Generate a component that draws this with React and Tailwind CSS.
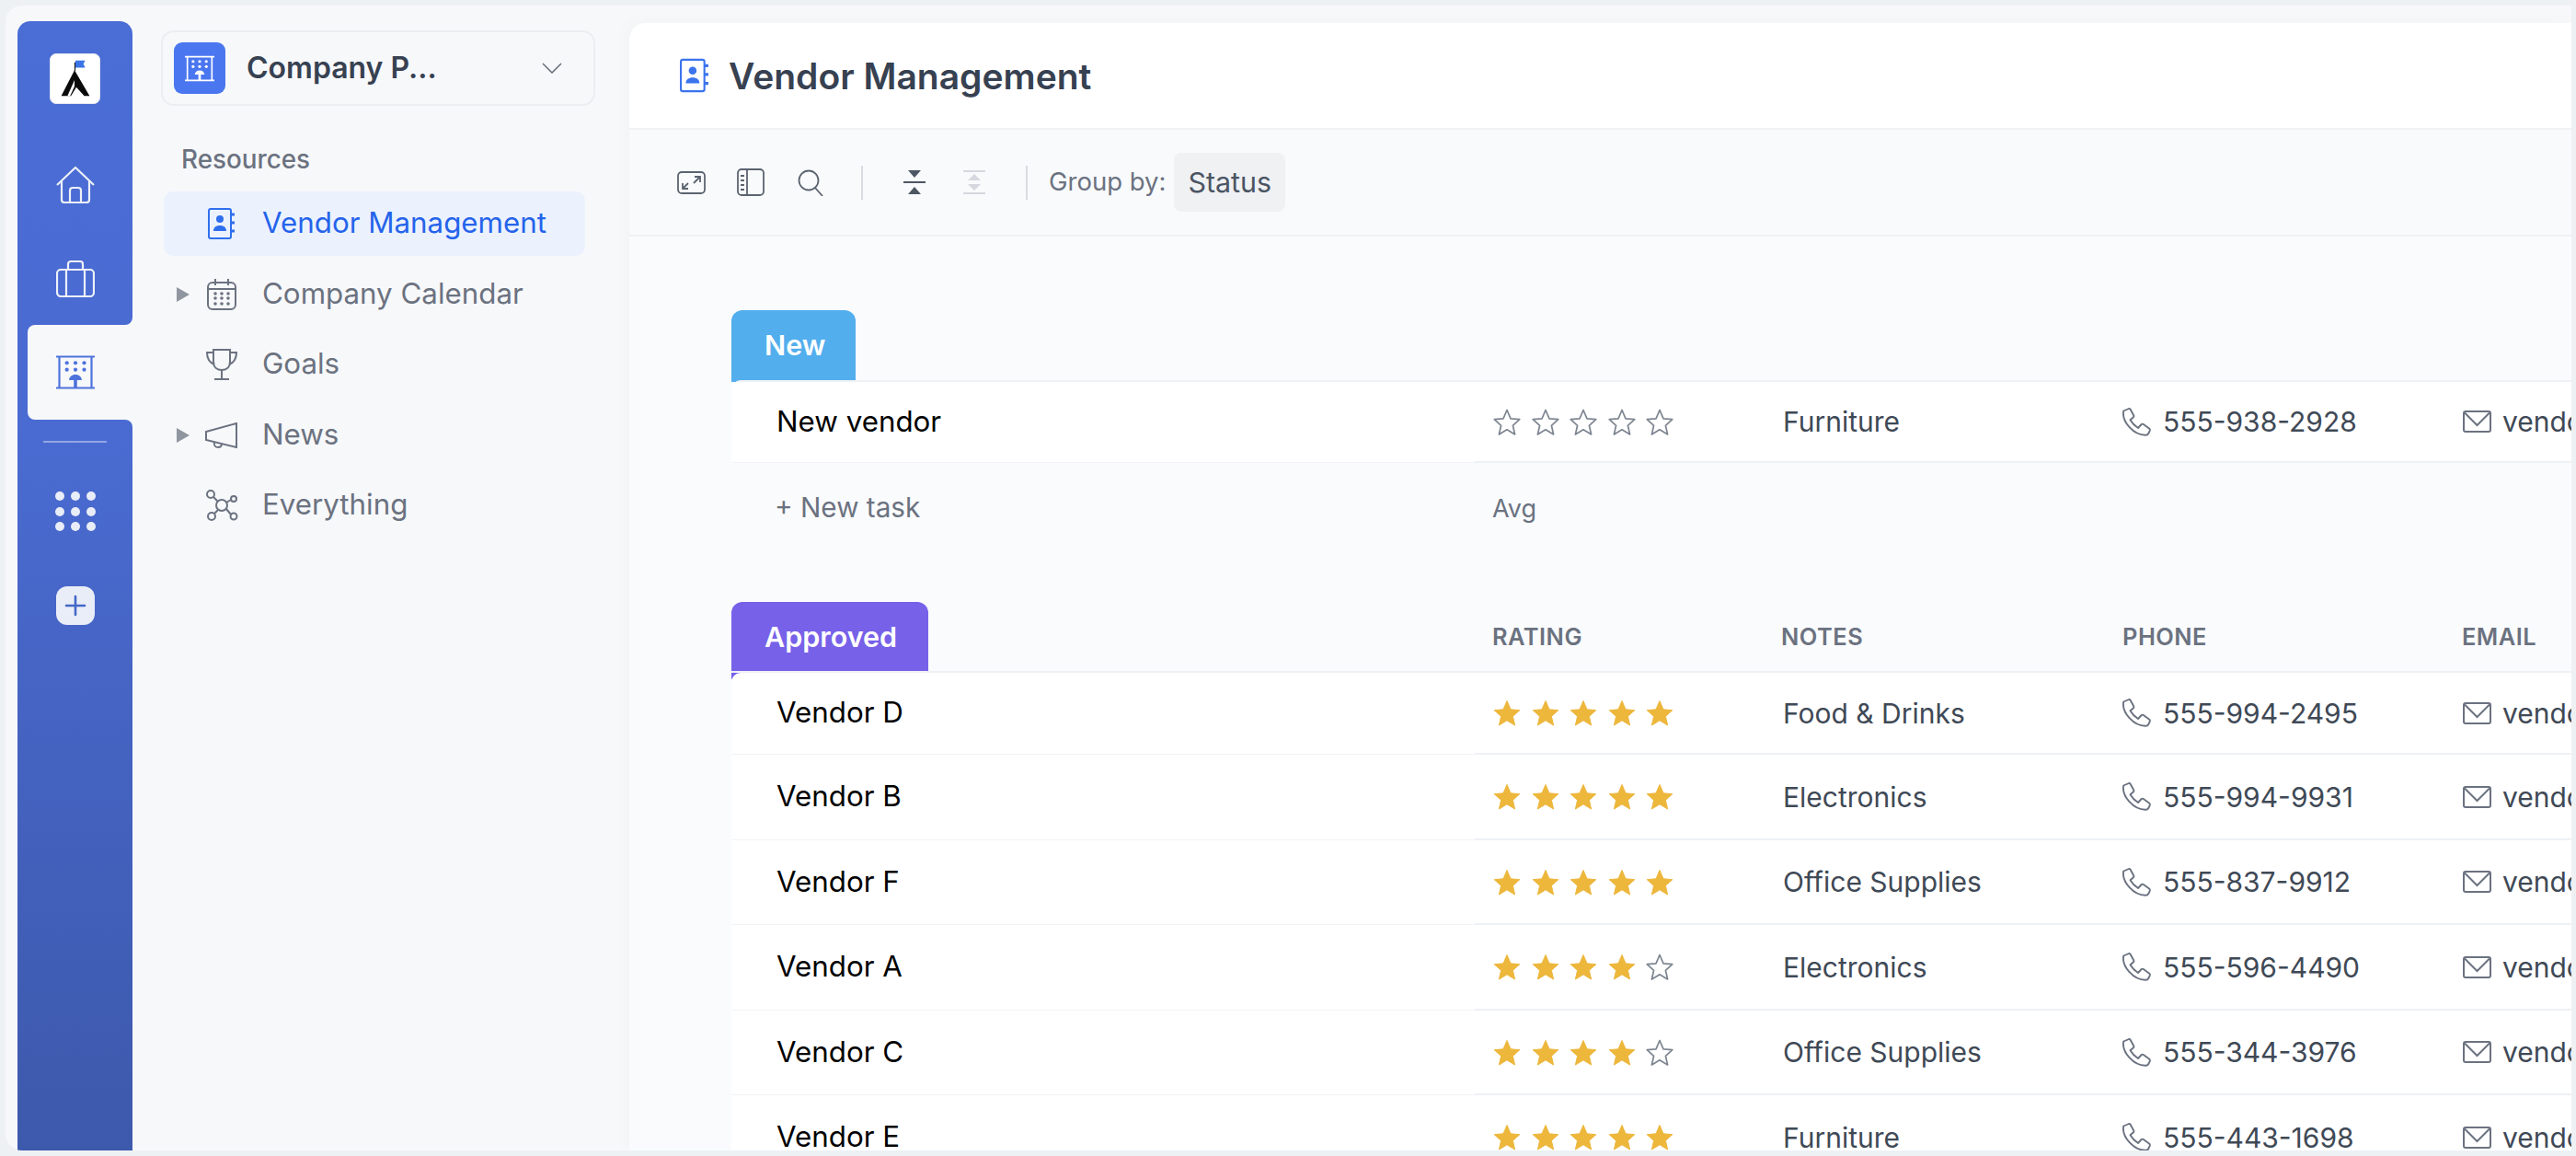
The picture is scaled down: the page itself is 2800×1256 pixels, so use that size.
const VENDORS = [
  { name: 'Vendor D', rating: 5, notes: 'Food & Drinks', phone: '555-994-2495', email: 'vendord@example.com', height: 'h-[89px]' },
  { name: 'Vendor B', rating: 5, notes: 'Electronics', phone: '555-994-9931', email: 'vendorb@example.com', height: 'h-[93px]' },
  { name: 'Vendor F', rating: 5, notes: 'Office Supplies', phone: '555-837-9912', email: 'vendorf@example.com', height: 'h-[92px]' },
  { name: 'Vendor A', rating: 4, notes: 'Electronics', phone: '555-596-4490', email: 'vendora@example.com', height: 'h-[93px]' },
  { name: 'Vendor C', rating: 4, notes: 'Office Supplies', phone: '555-344-3976', email: 'vendorc@example.com', height: 'h-[92px]' },
  { name: 'Vendor E', rating: 5, notes: 'Furniture', phone: '555-443-1698', email: 'vendore@example.com', height: 'h-[93px]' },
];

const GRID = 'grid grid-cols-[808px_335px_369px_370px_1fr]';

const BuildingIcon = ({ className }) => (
  <svg viewBox="0 0 42 37" className={className} fill="none" stroke="currentColor" strokeWidth="2.2">
    <path d="M0 1.5h42M0 35.5h42M3.5 1.5v34M38.5 1.5v34" />
    <g fill="currentColor" stroke="none">
      {[11.7, 21, 30.5].flatMap((x) => [8.3, 15.7].map((y) => <circle key={`${x}-${y}`} cx={x} cy={y} r="2.1" />))}
      <path d="M21 21c-4 0-6.5 2.5-7 6h5.2v8h3.6v-8H28c-.5-3.5-3-6-7-6z" />
    </g>
  </svg>
);

const ContactBook = ({ className }) => (
  <svg viewBox="0 0 30 34" className={className} fill="none" stroke="currentColor" strokeWidth="2">
    <rect x="1" y="1" width="24" height="32" rx="2" />
    <path d="M25 7h4M25 16h4M25 25h4" strokeWidth="3" />
    <circle cx="13" cy="12" r="4" fill="currentColor" stroke="none" />
    <path d="M6 25c0-4 3-6 7-6s7 2 7 6z" fill="currentColor" stroke="none" />
  </svg>
);

const Star = ({ filled }) => (
  <svg viewBox="0 0 30 29" className="w-[30px] h-[29px] shrink-0">
    <path
      d="M15 1.5l4 9.3 9.8.9-7.4 6.6 2.2 9.7L15 22.8 6.4 28l2.2-9.7-7.4-6.6 9.8-.9z"
      fill={filled ? '#edb73c' : 'none'}
      stroke={filled ? '#edb73c' : '#7d8590'}
      strokeWidth={filled ? 1 : 1.7}
      strokeLinejoin="round"
    />
  </svg>
);

const Stars = ({ count }) => (
  <div className="flex gap-[11.6px]">
    {[1, 2, 3, 4, 5].map((n) => <Star key={n} filled={n <= count} />)}
  </div>
);

const PhoneIcon = () => (
  <svg viewBox="0 0 31 31" className="w-[31px] h-[31px] shrink-0" fill="none" stroke="#6b7280" strokeWidth="1.9" strokeLinejoin="round">
    <path d="M1.2 3.5L7 1q1-.2 1.6.8l3.7 6.7q.3 1-.3 1.7l-3.5 3.1q3 5.2 8.5 8.7l3.7-4q.8-.7 1.8-.2l6.5 4.7q1.2 1 .8 2.3L28.3 28q-.8 1.8-3.3 1.8C12 29.8-1 15 1.2 3.5z" />
  </svg>
);

const MailIcon = () => (
  <svg viewBox="0 0 31 24" className="w-[31px] h-[24px] shrink-0" fill="none" stroke="#6b7280" strokeWidth="2">
    <rect x="1" y="1" width="29" height="22" rx="2" />
    <path d="M2 2.5l13.5 13.5L29 2.5" />
  </svg>
);

const Row = ({ name, rating, notes, phone, email, height = 'h-[88px]', first }) => (
  <div className={`${GRID} ${height} relative z-10 bg-white leading-none text-[30px] ${first ? 'rounded-tl-[10px]' : ''}`}>
    <div className="flex items-center pl-[49px] text-[31.3px] text-black border-b border-[#f1f3f6]">{name}</div>
    <div className="flex items-center pl-[20px] border-b-2 border-[#eef1f5]"><Stars count={rating} /></div>
    <div className="flex items-center text-[#3f4956] border-b-2 border-[#eef1f5]">{notes}</div>
    <div className="flex items-center gap-[13px] text-[#3f4956] border-b-2 border-[#eef1f5]">
      <PhoneIcon />
      {phone}
    </div>
    <div className="flex items-center gap-[12px] text-[#3f4956] whitespace-nowrap overflow-hidden border-b-2 border-[#eef1f5]">
      <MailIcon />
      {email}
    </div>
  </div>
);

const NavItem = ({ label, icon, active, caret }) => (
  <div className={`relative flex items-center h-[70px] rounded-[10px] ${active ? 'bg-[#ebf2fd] text-[#2563eb]' : 'text-[#6b7280]'}`}>
    {caret && (
      <svg viewBox="0 0 14 16" className="absolute left-[14px] w-[14px] h-[16px]">
        <path d="M0 0l14 8-14 8z" fill="#8f969f" />
      </svg>
    )}
    <div className="w-[107px] flex justify-center pl-[20px] pr-[2px] shrink-0">{icon}</div>
    <span className="text-[31.3px] leading-none">{label}</span>
  </div>
);

const grayStroke = { fill: 'none', stroke: '#6b7280', strokeWidth: 2 };

export default function App() {
  return (
    <div className="w-[2800px] h-[1256px] overflow-hidden bg-[#edf1f4] pt-[6px] pr-[5px] pb-[6px] pl-[6px] font-['Inter',sans-serif]">
      <div className="flex h-full bg-[#f7f8fa] rounded-l-[18px] overflow-hidden pl-[13px]">
        {/* icon rail */}
        <div className="w-[125px] shrink-0 mt-[17px] flex flex-col">
          <div className="h-[330px] flex flex-col items-center rounded-t-[14px] rounded-br-[8px] bg-gradient-to-b from-[#4a6dd6] to-[#4a6bd2]">
            <div className="mt-[35px] w-[55px] h-[55px] rounded-[7px] bg-white border-[1.5px] border-[#e6e9f0]">
              <svg viewBox="0 0 55 55" className="w-full h-full">
                <path d="M27.5 9v10" stroke="#111" strokeWidth="1.2" />
                <path d="M28 7h11l-2 4 2 4H28z" fill="#3b74e6" />
                <path d="M27 18l17 29h-6l-9-10-6 10H12z" fill="#0a0a0a" />
                <path d="M27 29l-8 18h3l5-11z" fill="#fff" />
              </svg>
            </div>
            <svg viewBox="0 0 42 40" className="mt-[68px] w-[42px] h-[40px]" fill="none" stroke="#edf0f8" strokeWidth="2.2" strokeLinejoin="round">
              <path d="M1 20L21 1l20 19" />
              <path d="M6 16v20a3 3 0 0 0 3 3h24a3 3 0 0 0 3-3V16" />
              <path d="M15 39V26a3 3 0 0 1 3-3h6a3 3 0 0 1 3 3v13" />
            </svg>
            <svg viewBox="0 0 42 40" className="mt-[62px] w-[42px] h-[40px]" fill="none" stroke="#edf0f8" strokeWidth="2.2">
              <rect x="1" y="10" width="40" height="29" rx="4" />
              <path d="M13 10V4a3 3 0 0 1 3-3h10a3 3 0 0 1 3 3v6M11 10v29M31 10v29" />
            </svg>
          </div>
          <div className="h-[103px] pl-[11px] bg-gradient-to-r from-[#4a6bd2] from-20% to-[#4a6bd2] to-20%">
            <div className="h-full rounded-l-[8px] bg-[#f7f8fa] flex items-center justify-center pr-[11px] text-[#4f73dc]">
              <BuildingIcon className="w-[42px] h-[37px]" />
            </div>
          </div>
          <div className="flex-1 flex flex-col items-center rounded-tr-[8px] bg-gradient-to-b from-[#4a6bd2] to-[#3d59ac]">
            <div className="mt-[23px] w-[69px] h-[2px] bg-white/40" />
            <div className="mt-[53px] grid grid-cols-3 gap-x-[7px] gap-y-[6.5px]">
              {[1, 2, 3, 4, 5, 6, 7, 8, 9].map((n) => (
                <div key={n} className="w-[10px] h-[10px] rounded-full bg-[#e9edf7]" />
              ))}
            </div>
            <div className="mt-[60px] w-[42px] h-[42px] rounded-[12px] bg-[#e9edf7] flex items-center justify-center">
              <svg viewBox="0 0 24 24" className="w-[24px] h-[24px]" stroke="#4468c8" strokeWidth="2.6" strokeLinecap="round">
                <path d="M12 2v20M2 12h20" />
              </svg>
            </div>
          </div>
        </div>

        {/* project panel */}
        <div className="w-[540px] shrink-0 pl-[31px]">
          <div className="mt-[27px] w-[472px] h-[82px] flex items-center rounded-[14px] border-2 border-[#ebeef1] pl-[12px]">
            <div className="w-[56px] h-[56px] rounded-[9px] bg-[#4a76f0] flex items-center justify-center text-white">
              <BuildingIcon className="w-[32px] h-[29px]" />
            </div>
            <span className="ml-[23px] text-[32px] leading-none font-semibold text-[#374151]">Company P...</span>
            <svg viewBox="0 0 22 12" className="ml-auto mr-[34px] w-[22px] h-[12px]" fill="none" stroke="#6b7280" strokeWidth="1.6">
              <path d="M1 1l10 10L21 1" />
            </svg>
          </div>
          <div className="mt-[39px] ml-[22px] h-[40px] flex items-center text-[27.8px] font-medium text-[#6b7280]">Resources</div>
          <div className="mt-[14px] ml-[3px] w-[458px] flex flex-col gap-[6.5px]">
            <NavItem
              active
              label="Vendor Management"
              icon={<ContactBook className="w-[30px] h-[34px] text-[#2f6fed]" />}
            />
            <NavItem
              caret
              label="Company Calendar"
              icon={
                <svg viewBox="0 0 32 34" className="w-[32px] h-[34px]" {...grayStroke}>
                  <rect x="1" y="4" width="30" height="29" rx="5" />
                  <path d="M1 11h30M9 0v7M23 0v7" />
                  <g fill="#6b7280" stroke="none">
                    {[9, 16, 23].flatMap((x) => [16, 21, 27].map((y) => <circle key={`${x}-${y}`} cx={x} cy={y} r="1.8" />))}
                  </g>
                </svg>
              }
            />
            <NavItem
              label="Goals"
              icon={
                <svg viewBox="0 0 34 34" className="w-[34px] h-[34px]" {...grayStroke}>
                  <path d="M8 1h18v13c0 6-4 9-9 9s-9-3-9-9z" />
                  <path d="M8 4H1c0 7 3 11 8 13M26 4h7c0 7-3 11-8 13M17 23v10M9 33h16" />
                </svg>
              }
            />
            <NavItem
              caret
              label="News"
              icon={
                <svg viewBox="0 0 36 28" className="w-[36px] h-[28px]" {...grayStroke}>
                  <path d="M34 1v26L1 19V10z" />
                  <path d="M10 21c-1 5 2 6 4 6s4-1 4-4" />
                </svg>
              }
            />
            <NavItem
              label="Everything"
              icon={
                <svg viewBox="0 0 36 34" className="w-[36px] h-[34px]" {...grayStroke}>
                  <circle cx="6" cy="5" r="4" />
                  <circle cx="18" cy="17" r="6" />
                  <circle cx="31" cy="10" r="3" />
                  <circle cx="7" cy="29" r="4" />
                  <circle cx="31" cy="29" r="3.5" />
                  <path d="M9 8l5 5M23 14l5-3M14 22l-4 4M23 21l5 6" />
                </svg>
              }
            />
          </div>
        </div>

        {/* main content */}
        <div className="flex-1 min-w-0 mt-[19px] rounded-tl-[18px] bg-[#fafbfd] overflow-hidden shadow-[-6px_-2px_16px_rgba(0,0,0,0.02)]">
          <div className="h-[116px] bg-white flex items-center pl-[55px] border-b-2 border-[#f0f2f4]">
            <ContactBook className="w-[32px] h-[38px] text-[#3b74ed]" />
            <h1 className="ml-[21px] text-[39px] leading-none font-semibold text-[#374151]">Vendor Management</h1>
          </div>

          <div className="h-[116px] flex items-center pl-[52px] border-b-2 border-[#f0f2f4] bg-[#f9fafc]">
            <svg viewBox="0 0 31 25" className="w-[31px] h-[25px]" fill="none" stroke="#5b6470" strokeWidth="1.8">
              <rect x="1" y="1" width="29" height="23" rx="4" />
              <path d="M19 6h6v6M25 6l-7 7M6 13v6h6M6 19l6-6" />
            </svg>
            <svg viewBox="0 0 30 30" className="ml-[34px] w-[30px] h-[30px]" fill="none" stroke="#5b6470" strokeWidth="1.8">
              <rect x="1" y="1" width="28" height="28" rx="4" />
              <path d="M11 1v28" />
              <path d="M4 8h4M4 13h4M4 18h4M4 23h4" strokeWidth="2.2" />
            </svg>
            <svg viewBox="0 0 28 29" className="ml-[36px] w-[28px] h-[29px]" fill="none" stroke="#5b6470" strokeWidth="1.8">
              <circle cx="12" cy="12" r="10.5" />
              <path d="M19 20l8 9" />
            </svg>
            <div className="ml-[41px] w-[2px] h-[37px] bg-[#d8dce1]" />
            <svg viewBox="0 0 24 26" className="ml-[44px] w-[24px] h-[26px]">
              <path d="M5 0h14l-7 8zM5 26h14l-7-8z" fill="#4d5663" />
              <path d="M0 13h24" stroke="#4d5663" strokeWidth="2" />
            </svg>
            <svg viewBox="0 0 24 26" className="ml-[41px] w-[24px] h-[26px]">
              <path d="M5 11h14l-7-7zM5 15h14l-7 7z" fill="#d5d9df" />
              <path d="M0 1h24M0 25h24" stroke="#d5d9df" strokeWidth="2" />
            </svg>
            <div className="ml-[44px] w-[2px] h-[37px] bg-[#d8dce1]" />
            <span className="ml-[23px] text-[27.5px] leading-none text-[#6b7280]">Group by:</span>
            <div className="ml-[9px] px-[15px] h-[64px] flex items-center rounded-[8px] bg-[#eff1f3] text-[30.4px] leading-none text-[#4b5563]">Status</div>
          </div>

          <div className="pl-[111px] pt-[80px]">
            {/* New */}
            <div className="w-[135px] h-[84px] -mb-[8px] rounded-t-[12px] bg-[#52aeed] text-white font-semibold text-[30.5px] leading-none pl-[36px] pt-[23px]">New</div>
            <div className="rounded-l-[10px] border-t-2 border-[#eef1f5] relative z-10">
              <Row name="New vendor" rating={0} notes="Furniture" phone="555-938-2928" email="vendor@example.com" />
            </div>
            <div className={`${GRID} h-[98px] items-center text-[#6b7280]`}>
              <div className="pl-[47px] text-[29.7px] leading-none">+ New task</div>
              <div className="pl-[19px] text-[27px] leading-none">Avg</div>
            </div>

            {/* Approved */}
            <div className={`${GRID} mt-[53px] h-[75px] items-center text-[25.4px] leading-none font-semibold tracking-[0.5px] text-[#6b7280]`}>
              <div className="h-[75px] relative">
                <div className="w-[214px] h-[84px] rounded-t-[12px] bg-[#7761e9] text-white text-[30.5px] tracking-normal pl-[36px] pt-[23px]">Approved</div>
              </div>
              <div className="pl-[19px]">RATING</div>
              <div className="-ml-[2px]">NOTES</div>
              <div>PHONE</div>
              <div className="-ml-[1px]">EMAIL</div>
            </div>
            <div className="border-t-2 border-[#eef1f5] relative z-10">
              {VENDORS.map((v, i) => (
                <Row key={v.name} first={i === 0} {...v} />
              ))}
            </div>
          </div>
        </div>
      </div>
    </div>
  );
}
